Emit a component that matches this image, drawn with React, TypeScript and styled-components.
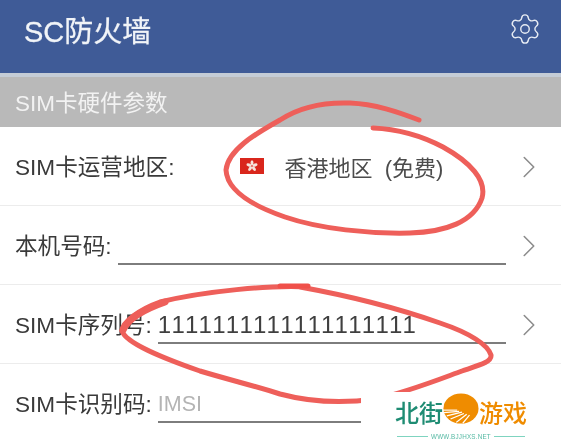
import styled, { createGlobalStyle } from "styled-components";
import { Settings, ChevronRight } from "lucide-react";

const FONT = `"Liberation Sans", "Noto Sans CJK SC", sans-serif`;

const Global = createGlobalStyle`
  html, body {
    margin: 0;
    padding: 0;
    background: #fff;
  }
`;

export default function App() {
  return (
    <Screen>
      <Global />
      <Header>
        <Title>SC防火墙</Title>
        <GearIcon size={34} strokeWidth={1} />
      </Header>
      <Section>SIM卡硬件参数</Section>
      <Row>
        <Label>SIM卡运营地区:</Label>
        <Region>
          <Flag viewBox="0 0 24 16">
            <rect width="24" height="16" fill="#d9261c" />
            <g fill="#f6e4dc" transform="translate(12 8)">
              <ellipse cx="0" cy="-3.2" rx="1.5" ry="2.6" />
              <ellipse cx="0" cy="-3.2" rx="1.5" ry="2.6" transform="rotate(72)" />
              <ellipse cx="0" cy="-3.2" rx="1.5" ry="2.6" transform="rotate(144)" />
              <ellipse cx="0" cy="-3.2" rx="1.5" ry="2.6" transform="rotate(216)" />
              <ellipse cx="0" cy="-3.2" rx="1.5" ry="2.6" transform="rotate(288)" />
            </g>
          </Flag>
          <RegionName>{"香港地区  (免费)"}</RegionName>
        </Region>
        <Arrow size={38} strokeWidth={1} />
      </Row>
      <Row>
        <Label>本机号码:</Label>
        <Field />
        <Arrow size={38} strokeWidth={1} />
      </Row>
      <Row>
        <Label>SIM卡序列号:</Label>
        <Field>{"1".repeat(19)}</Field>
        <Arrow size={38} strokeWidth={1} />
      </Row>
      <Row>
        <Label>SIM卡识别码:</Label>
        <Field $placeholder>IMSI</Field>
        <Arrow size={38} strokeWidth={1} />
      </Row>

      <Scribble viewBox="0 0 561 442">
        <path
          d="M419 120 C398 112 375 104 350 103 C322 102 298 108 280 120 C255 134 228 150 226 170 C227 190 250 205 285 217 C320 229 370 234 410 233 C445 232 474 222 482 198 C487 180 470 162 443 147 C422 136 397 129 373 128"
          strokeWidth="5"
        />
        <path
          d="M308 287 C270 285 205 291 160 302 C140 309 122 322 122 331 C126 343 160 357 200 371 C230 380 255 386 280 394 C310 402 340 404 375 399 C405 393 440 379 462 371 C480 365 492 362 491 355 C488 345 470 333 440 323 C400 309 350 296 300 287"
          strokeWidth="5"
        />
        <path d="M123 330 C128 319 145 309 165 302" strokeWidth="7" />
        <path d="M280 286 H308" strokeWidth="5" stroke="#f0504a" />
      </Scribble>

      <Watermark>
        <Brand>
          <BrandText>北街</BrandText>
          <Sun viewBox="0 0 38 38" preserveAspectRatio="none">
            <circle cx="19" cy="19" r="18.5" fill="#ef8c00" />
            <g stroke="#fff" strokeWidth="1.4" fill="none">
              <path d="M0 21 H15" />
              <path d="M1 24 L17 22.5" />
              <path d="M4 28 L20 23.5" />
              <path d="M8 32 L22 25" />
              <path d="M14 36 L25 26" />
              <path d="M21 37 L28 27" />
            </g>
          </Sun>
          <BrandText $orange>游戏</BrandText>
        </Brand>
        <SiteLine>
          <Rule />
          <SiteName>WWW.BJJHXS.NET</SiteName>
          <Rule />
        </SiteLine>
      </Watermark>
    </Screen>
  );
}

const Screen = styled.div`
  position: relative;
  width: 561px;
  height: 442px;
  overflow: hidden;
  background: #fff;
  font-family: ${FONT};
  filter: blur(0.35px);
`;

const Header = styled.header`
  display: flex;
  align-items: center;
  justify-content: space-between;
  box-sizing: border-box;
  height: 77px;
  padding: 0 19px 15px 24px;
  background: #3f5b97;
  border-bottom: 4px solid #c4ccd6;
`;

const Title = styled.h1`
  margin: 6px 0 0;
  color: #f1f4f8;
  font-size: 29px;
  font-weight: 400;
  line-height: 1;
  -webkit-text-stroke: 0.3px #f1f4f8;
`;

const GearIcon = styled(Settings)`
  color: #e6ebf3;
`;

const Section = styled.div`
  display: flex;
  align-items: center;
  box-sizing: border-box;
  height: 50px;
  padding: 0 0 3px 15px;
  background: #b9b9b9;
  color: #f2f2f2;
  font-size: 22.5px;
`;

const Row = styled.div`
  display: flex;
  align-items: center;
  box-sizing: border-box;
  height: 79px;
  padding: 2px 13px 0 15px;
  border-bottom: 1px solid #ececec;
  background: #fff;
  &:last-of-type {
    border-bottom: none;
  }
`;

const Label = styled.span`
  flex: none;
  margin-top: 2px;
  color: #3a3a3a;
  font-size: 22.6px;
  line-height: 1;
  white-space: nowrap;
`;

const Region = styled.div`
  display: flex;
  flex: 1;
  align-items: center;
  margin-left: 66px;
`;

const Flag = styled.svg`
  width: 24px;
  height: 16px;
  flex: none;
  margin-top: -3px;
`;

const RegionName = styled.span`
  margin: 0 0 3px 20px;
  color: #4c4c4c;
  font-size: 22px;
  white-space: pre;
`;

const Field = styled.div<{ $placeholder?: boolean }>`
  flex: 1;
  align-self: flex-end;
  box-sizing: border-box;
  height: 36px;
  margin: 0 4px 19px 6px;
  border-bottom: 2px solid #7d7d7d;
  color: ${(p) => (p.$placeholder ? "#b4b4b4" : "#3f3f3f")};
  font-size: ${(p) => (p.$placeholder ? "21.5px" : "24px")};
  font-kerning: none;
  letter-spacing: ${(p) => (p.$placeholder ? "0" : "0.25px")};
  line-height: 34px;
  white-space: nowrap;
`;

const Arrow = styled(ChevronRight)`
  flex: none;
  color: #8c8c8c;
`;

const Scribble = styled.svg`
  position: absolute;
  inset: 0;
  width: 561px;
  height: 442px;
  fill: none;
  stroke: #ee5f5a;
  stroke-linecap: round;
  stroke-linejoin: round;
  pointer-events: none;
`;

const Watermark = styled.div`
  position: absolute;
  left: 361px;
  top: 392px;
  display: flex;
  flex-direction: column;
  align-items: center;
  width: 200px;
  height: 50px;
  background: #fff;
`;

const Brand = styled.div`
  display: flex;
  align-items: center;
  height: 38px;
  margin-top: 1px;
`;

const BrandText = styled.span<{ $orange?: boolean }>`
  color: ${(p) => (p.$orange ? "#ef8c00" : "#1e8c73")};
  font-family: "Noto Sans CJK SC", sans-serif;
  font-size: 24px;
  font-weight: 500;
  line-height: 1;
`;

const Sun = styled.svg`
  width: 36px;
  height: 31px;
  flex: none;
  margin-bottom: 7px;
`;

const SiteLine = styled.div`
  display: flex;
  align-items: center;
  gap: 3px;
  margin-top: 2px;
`;

const Rule = styled.span`
  width: 31px;
  height: 1px;
  background: #7fd4c0;
`;

const SiteName = styled.span`
  color: #55b9a3;
  font-size: 6.3px;
  letter-spacing: 0.2px;
  white-space: nowrap;
`;
